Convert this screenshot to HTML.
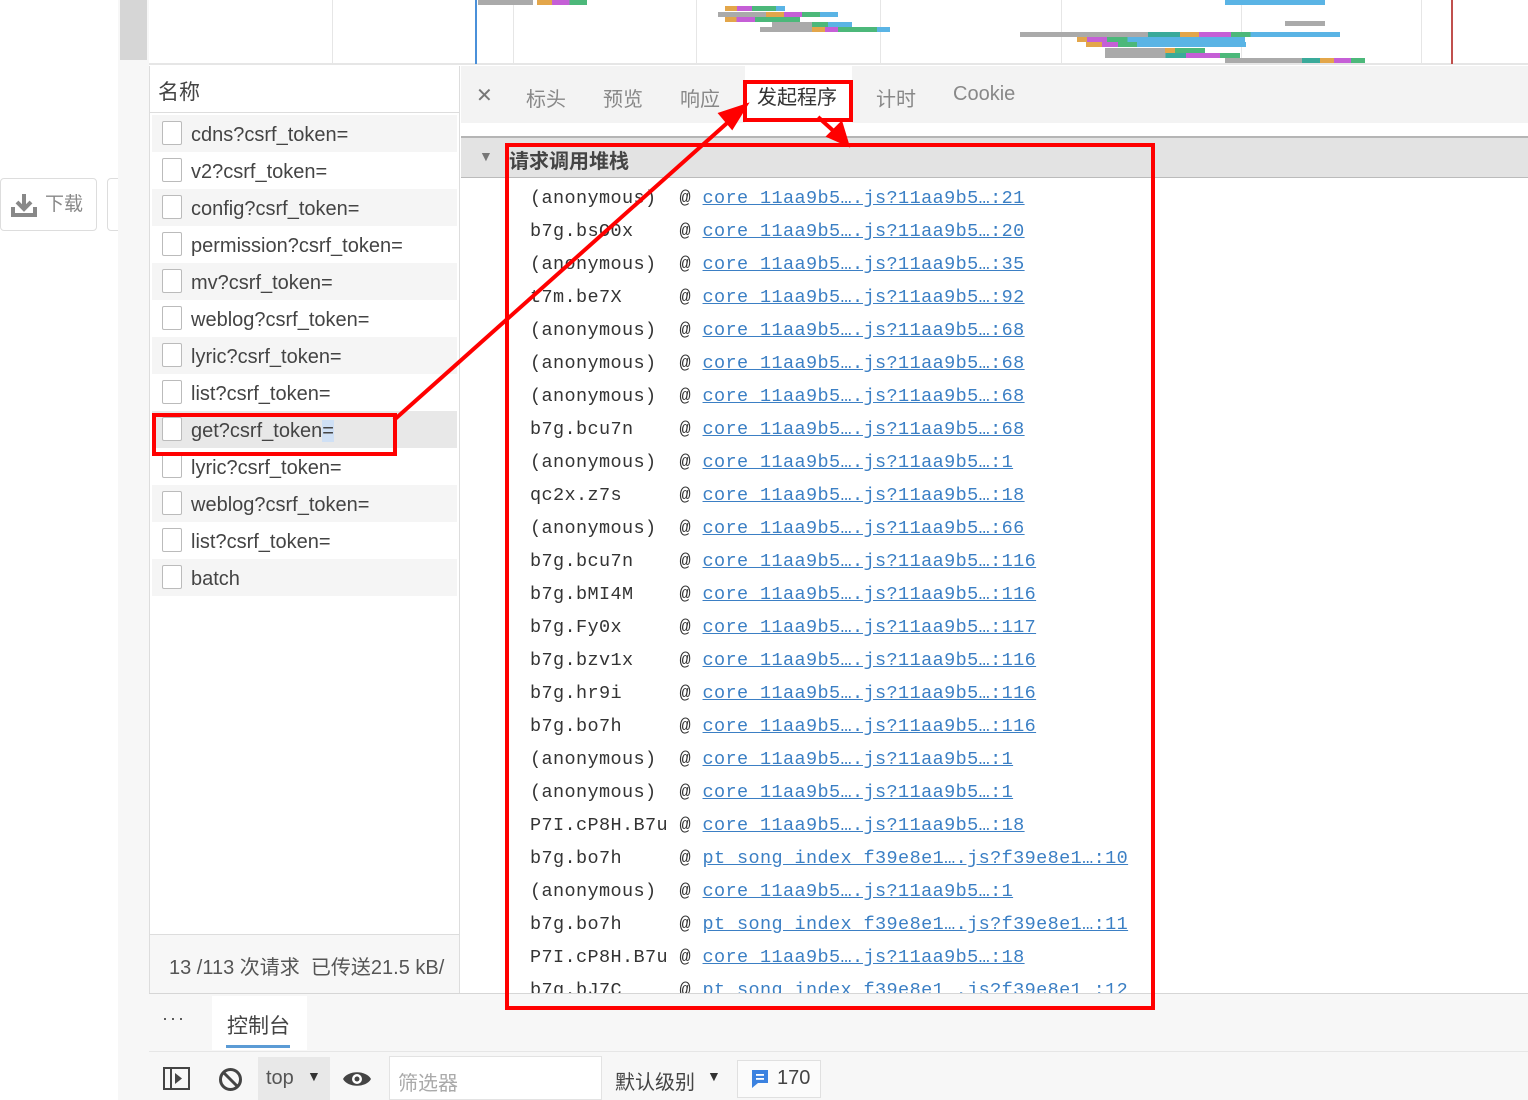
<!DOCTYPE html><html><head><meta charset="utf-8"><style>
*{margin:0;padding:0;box-sizing:border-box}
body{width:1528px;height:1100px;position:relative;overflow:hidden;background:#fff;font-family:"Liberation Sans","Noto Sans CJK SC",sans-serif;color:#333}
.a{position:absolute}
.row{position:absolute;left:152px;width:305px;height:37px;font-size:20px;color:#444;line-height:41px;padding-left:39px}
.row i{position:absolute;left:10px;top:6px;width:20px;height:24px;border:1px solid #bbb;background:#fff;border-radius:2px}
.g{background:#f5f5f5}
.st{position:absolute;left:530px;font-family:"Liberation Mono",monospace;font-size:18.5px;letter-spacing:0.4px;color:#333;white-space:pre;line-height:33px}
.st u{color:#3b7fc4;text-decoration:underline}
.tab{position:absolute;top:83px;font-size:20px;color:#888}
.b{position:absolute;height:5px}
</style></head><body>
<div class="a" style="left:0;top:178px;width:97px;height:53px;border:1px solid #ddd;border-radius:4px;font-size:19px;color:#888;line-height:51px;padding-left:44px">下载</div>
<svg class="a" style="left:10px;top:192px" width="28" height="26"><path d="M14 2v14M7 10l7 7 7-7" stroke="#888" stroke-width="4" fill="none"/><path d="M3 15v8h22v-8" stroke="#888" stroke-width="4" fill="none"/></svg>
<div class="a" style="left:107px;top:178px;width:20px;height:53px;border:1px solid #ddd;border-radius:4px"></div>
<div class="a" style="left:118px;top:0;width:31px;height:1100px;background:#f7f7f7"></div>
<div class="a" style="left:120px;top:0;width:27px;height:60px;background:#d6d6d6"></div>
<div class="a" style="left:149px;top:0;width:1379px;height:65px;background:#fff;border-bottom:2px solid #e6e6e6"></div>
<div class="a" style="left:332px;top:0;width:1px;height:64px;background:#e6e6e6"></div>
<div class="a" style="left:513px;top:0;width:1px;height:64px;background:#e6e6e6"></div>
<div class="a" style="left:696px;top:0;width:1px;height:64px;background:#e6e6e6"></div>
<div class="a" style="left:880px;top:0;width:1px;height:64px;background:#e6e6e6"></div>
<div class="a" style="left:1061px;top:0;width:1px;height:64px;background:#e6e6e6"></div>
<div class="a" style="left:1241px;top:0;width:1px;height:64px;background:#e6e6e6"></div>
<div class="a" style="left:1421px;top:0;width:1px;height:64px;background:#e6e6e6"></div>
<div class="a" style="left:475px;top:0;width:2px;height:64px;background:#4a90d9"></div>
<div class="a" style="left:1451px;top:0;width:2px;height:64px;background:#c0504d"></div>
<div class="b" style="left:478px;top:0;width:55px;background:#aaa"></div><div class="b" style="left:537px;top:0;width:50px;background:linear-gradient(90deg,#e3a64a 30%,#c55fd6 30% 65%,#4cb87a 65%)"></div>
<div class="b" style="left:725px;top:6px;width:60px;background:linear-gradient(90deg,#e3a64a 20%,#c55fd6 20% 45%,#4cb87a 45% 85%,#5ab4e5 85%)"></div>
<div class="b" style="left:718px;top:12px;width:120px;background:linear-gradient(90deg,#aaa 40%,#e3a64a 40% 55%,#c55fd6 55% 70%,#4cb87a 70% 85%,#5ab4e5 85%)"></div>
<div class="b" style="left:725px;top:17px;width:75px;background:linear-gradient(90deg,#e3a64a 15%,#c55fd6 15% 40%,#4cb87a 40%)"></div>
<div class="b" style="left:772px;top:22px;width:80px;background:linear-gradient(90deg,#aaa 50%,#4cb87a 50% 70%,#5ab4e5 70%)"></div>
<div class="b" style="left:760px;top:27px;width:130px;background:linear-gradient(90deg,#aaa 40%,#e3a64a 40% 50%,#c55fd6 50% 60%,#4cb87a 60% 90%,#5ab4e5 90%)"></div>
<div class="b" style="left:1020px;top:32px;width:320px;background:linear-gradient(90deg,#aaa 40%,#3aaa9a 40% 50%,#e3a64a 50% 56%,#c55fd6 56% 66%,#4cb87a 66% 72%,#5ab4e5 72%)"></div>
<div class="b" style="left:1077px;top:37px;width:168px;background:linear-gradient(90deg,#e3a64a 6%,#c55fd6 6% 18%,#4cb87a 18% 30%,#5ab4e5 30%)"></div>
<div class="b" style="left:1086px;top:42px;width:160px;background:linear-gradient(90deg,#e3a64a 10%,#c55fd6 10% 20%,#4cb87a 20% 32%,#5ab4e5 32%)"></div>
<div class="b" style="left:1105px;top:48px;width:100px;background:linear-gradient(90deg,#aaa 60%,#e3a64a 60% 70%,#4cb87a 70%)"></div>
<div class="b" style="left:1105px;top:53px;width:135px;background:linear-gradient(90deg,#aaa 45%,#3aaa9a 45% 60%,#c55fd6 60% 85%,#4cb87a 85%)"></div>
<div class="b" style="left:1225px;top:58px;width:140px;background:linear-gradient(90deg,#aaa 55%,#3aaa9a 55% 68%,#e3a64a 68% 78%,#c55fd6 78% 90%,#4cb87a 90%)"></div>
<div class="b" style="left:1285px;top:21px;width:40px;background:#aaa"></div>
<div class="b" style="left:1225px;top:0;width:100px;background:#5ab4e5"></div>
<div class="a" style="left:149px;top:66px;width:311px;height:927px;border-left:1px solid #ddd;border-right:1px solid #ddd;background:#fff"></div>
<div class="a" style="left:158px;top:76px;font-size:21px;color:#444">名称</div>
<div class="a" style="left:150px;top:112px;width:309px;height:1px;background:#ddd"></div>
<div class="row g" style="top:115px"><i></i>cdns?csrf_token=</div>
<div class="row" style="top:152px"><i></i>v2?csrf_token=</div>
<div class="row g" style="top:189px"><i></i>config?csrf_token=</div>
<div class="row" style="top:226px"><i></i>permission?csrf_token=</div>
<div class="row g" style="top:263px"><i></i>mv?csrf_token=</div>
<div class="row" style="top:300px"><i></i>weblog?csrf_token=</div>
<div class="row g" style="top:337px"><i></i>lyric?csrf_token=</div>
<div class="row" style="top:374px"><i></i>list?csrf_token=</div>
<div class="row" style="top:411px;background:#e8e8e8"><i></i>get?csrf_token<span style="background:#cfe0f5">=</span></div>
<div class="row" style="top:448px"><i></i>lyric?csrf_token=</div>
<div class="row g" style="top:485px"><i></i>weblog?csrf_token=</div>
<div class="row" style="top:522px"><i></i>list?csrf_token=</div>
<div class="row g" style="top:559px"><i></i>batch</div>
<div class="a" style="left:150px;top:934px;width:309px;height:1px;background:#ddd"></div>
<div class="a" style="left:150px;top:935px;width:309px;height:58px;background:#f7f7f7"></div>
<div class="a" style="left:169px;top:951px;font-size:20px;color:#555;white-space:nowrap">13 /113 次请求&nbsp; 已传送21.5 kB/</div>
<div class="a" style="left:461px;top:66px;width:1067px;height:57px;background:#f3f3f3"></div>
<div class="tab" style="left:476px;color:#777">✕</div>
<div class="tab" style="left:526px">标头</div>
<div class="tab" style="left:603px">预览</div>
<div class="tab" style="left:680px">响应</div>
<div class="a" style="left:745px;top:66px;width:107px;height:57px;background:#fff"></div>
<div class="tab" style="left:757px;top:81px;color:#333">发起程序</div>
<div class="tab" style="left:876px">计时</div>
<div class="tab" style="left:953px">Cookie</div>
<div class="a" style="left:461px;top:136px;width:1067px;height:42px;background:#e3e3e3;border-top:2px solid #b5b5b5;border-bottom:1px solid #bbb"></div>
<div class="a" style="left:479px;top:148px;font-size:14px;color:#777">▼</div>
<div class="a" style="left:509px;top:145px;font-size:20px;font-weight:bold;color:#444">请求调用堆栈</div>
<div class="a" style="left:461px;top:178px;width:1067px;height:815px;overflow:hidden">
<div style="position:relative;top:4px;left:-461px">
<div class="st" style="top:0">(anonymous)  @ <u>core 11aa9b5….js?11aa9b5…:21</u></div>
<div class="st" style="top:33px">b7g.bsO0x    @ <u>core 11aa9b5….js?11aa9b5…:20</u></div>
<div class="st" style="top:66px">(anonymous)  @ <u>core 11aa9b5….js?11aa9b5…:35</u></div>
<div class="st" style="top:99px">t7m.be7X     @ <u>core 11aa9b5….js?11aa9b5…:92</u></div>
<div class="st" style="top:132px">(anonymous)  @ <u>core 11aa9b5….js?11aa9b5…:68</u></div>
<div class="st" style="top:165px">(anonymous)  @ <u>core 11aa9b5….js?11aa9b5…:68</u></div>
<div class="st" style="top:198px">(anonymous)  @ <u>core 11aa9b5….js?11aa9b5…:68</u></div>
<div class="st" style="top:231px">b7g.bcu7n    @ <u>core 11aa9b5….js?11aa9b5…:68</u></div>
<div class="st" style="top:264px">(anonymous)  @ <u>core 11aa9b5….js?11aa9b5…:1</u></div>
<div class="st" style="top:297px">qc2x.z7s     @ <u>core 11aa9b5….js?11aa9b5…:18</u></div>
<div class="st" style="top:330px">(anonymous)  @ <u>core 11aa9b5….js?11aa9b5…:66</u></div>
<div class="st" style="top:363px">b7g.bcu7n    @ <u>core 11aa9b5….js?11aa9b5…:116</u></div>
<div class="st" style="top:396px">b7g.bMI4M    @ <u>core 11aa9b5….js?11aa9b5…:116</u></div>
<div class="st" style="top:429px">b7g.Fy0x     @ <u>core 11aa9b5….js?11aa9b5…:117</u></div>
<div class="st" style="top:462px">b7g.bzv1x    @ <u>core 11aa9b5….js?11aa9b5…:116</u></div>
<div class="st" style="top:495px">b7g.hr9i     @ <u>core 11aa9b5….js?11aa9b5…:116</u></div>
<div class="st" style="top:528px">b7g.bo7h     @ <u>core 11aa9b5….js?11aa9b5…:116</u></div>
<div class="st" style="top:561px">(anonymous)  @ <u>core 11aa9b5….js?11aa9b5…:1</u></div>
<div class="st" style="top:594px">(anonymous)  @ <u>core 11aa9b5….js?11aa9b5…:1</u></div>
<div class="st" style="top:627px">P7I.cP8H.B7u @ <u>core 11aa9b5….js?11aa9b5…:18</u></div>
<div class="st" style="top:660px">b7g.bo7h     @ <u>pt song index f39e8e1….js?f39e8e1…:10</u></div>
<div class="st" style="top:693px">(anonymous)  @ <u>core 11aa9b5….js?11aa9b5…:1</u></div>
<div class="st" style="top:726px">b7g.bo7h     @ <u>pt song index f39e8e1….js?f39e8e1…:11</u></div>
<div class="st" style="top:759px">P7I.cP8H.B7u @ <u>core 11aa9b5….js?11aa9b5…:18</u></div>
<div class="st" style="top:792px">b7g.bJ7C     @ <u>pt song index f39e8e1….js?f39e8e1…:12</u></div>
</div></div>
<div class="a" style="left:149px;top:993px;width:1379px;height:107px;background:#f7f7f7;border-top:1px solid #d6d6d6"></div>
<div class="a" style="left:162px;top:1008px;font-size:18px;color:#444;letter-spacing:2px">···</div>
<div class="a" style="left:212px;top:996px;width:95px;height:54px;background:#fff"></div>
<div class="a" style="left:227px;top:1010px;font-size:21px;color:#444">控制台</div>
<div class="a" style="left:226px;top:1045px;width:64px;height:3px;background:#5b9bd5"></div>
<div class="a" style="left:149px;top:1051px;width:1379px;height:1px;background:#e6e6e6"></div>
<svg class="a" style="left:163px;top:1067px" width="28" height="24"><rect x="1" y="1" width="25" height="21" fill="none" stroke="#444" stroke-width="2"/><line x1="8" y1="1" x2="8" y2="22" stroke="#444" stroke-width="2"/><path d="M12 6l7 5.5-7 5.5z" fill="#444"/></svg>
<svg class="a" style="left:218px;top:1067px" width="25" height="25"><circle cx="12.5" cy="12.5" r="10" fill="none" stroke="#444" stroke-width="3"/><line x1="6" y1="6" x2="19" y2="19" stroke="#444" stroke-width="3"/></svg>
<div class="a" style="left:258px;top:1057px;width:72px;height:43px;background:#e8e8e8"></div>
<div class="a" style="left:266px;top:1067px;font-size:20px;color:#555">top</div>
<div class="a" style="left:307px;top:1068px;font-size:14px;color:#333">▼</div>
<svg class="a" style="left:342px;top:1068px" width="30" height="22"><path d="M1 11C6 2 24 2 29 11 24 20 6 20 1 11z" fill="#444"/><circle cx="15" cy="11" r="5" fill="#fff"/><circle cx="15" cy="11" r="2.5" fill="#444"/></svg>
<div class="a" style="left:389px;top:1056px;width:213px;height:44px;background:#fff;border:1px solid #e3e3e3"></div>
<div class="a" style="left:398px;top:1067px;font-size:20px;color:#aaa">筛选器</div>
<div class="a" style="left:615px;top:1066px;font-size:20px;color:#444">默认级别</div>
<div class="a" style="left:707px;top:1068px;font-size:14px;color:#333">▼</div>
<div class="a" style="left:737px;top:1060px;width:84px;height:38px;border:1px solid #e0e0e0;background:#fbfbfb"></div>
<svg class="a" style="left:750px;top:1068px" width="20" height="22"><path d="M2 2h16v13H8l-6 5z" fill="#3b82e0"/><rect x="6" y="6" width="8" height="1.8" fill="#fff"/><rect x="6" y="10" width="8" height="1.8" fill="#fff"/></svg>
<div class="a" style="left:777px;top:1067px;font-size:20px;color:#444">170</div>
<div class="a" style="left:743px;top:80px;width:110px;height:42px;border:4px solid #f00"></div>
<div class="a" style="left:505px;top:143px;width:650px;height:867px;border:4px solid #f00"></div>
<div class="a" style="left:152px;top:413px;width:245px;height:43px;border:4px solid #f00"></div>
<svg class="a" style="left:0;top:0" width="1528" height="1100"><g stroke="#f00" stroke-width="4" fill="#f00"><line x1="394" y1="420" x2="735" y2="116"/><path d="M745 106l-24 8 11 13z"/><line x1="818" y1="117" x2="838" y2="135"/><path d="M847 144l-6-20-12 12z"/></g></svg>
</body></html>
